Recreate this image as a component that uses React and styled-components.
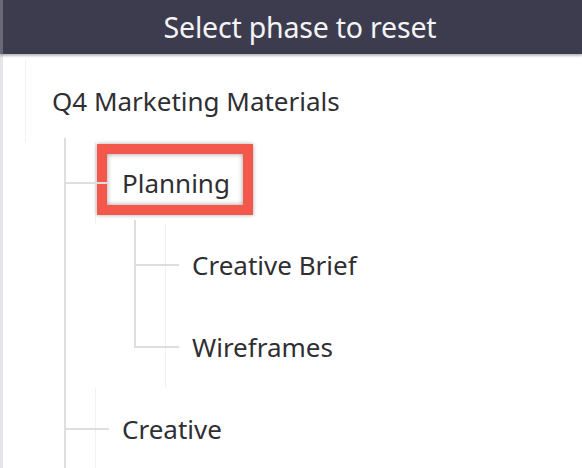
import React from "react";
import styled, { createGlobalStyle, css } from "styled-components";

const Global = createGlobalStyle`
  html, body { margin: 0; padding: 0; background: #fff; }
  body { width: 582px; height: 468px; overflow: hidden; font-family: "Noto Sans", "Open Sans", sans-serif; }
`;

const Frame = styled.div`
  width: 582px;
  height: 468px;
  overflow: hidden;
  display: flex;
  flex-direction: column;
  background: #fff;
`;

const Header = styled.header`
  flex: 0 0 54px;
  display: flex;
  align-items: center;
  justify-content: center;
  padding-left: 15px;
  background: #3d3c4f;
  border-left: 3px solid #6a6978;
  color: #f4f4f6;
  font-size: 28.5px;
  letter-spacing: -0.2px;
  box-shadow: 0 2px 2px rgba(60, 60, 80, 0.35);
  position: relative;
  z-index: 1;
`;

const Body = styled.div`
  flex: 1;
  border-left: 3px solid #e6e6ea;
  padding-top: 6px;
  overflow: hidden;
`;

const Row = styled.div`
  height: 82px;
  display: flex;
  align-items: center;
  border-left: 1px solid #f2f2f4;
  padding-left: ${(p) => p.$pad}px;
  margin-left: ${(p) => p.$offset || 0}px;
`;

const Label = styled.span`
  position: relative;
  font-size: 26px;
  line-height: 32px;
  color: #2f2f33;
  ${(p) =>
    p.$highlight &&
    css`
      &::after {
        content: "";
        position: absolute;
        top: -23px;
        bottom: -16px;
        left: -25px;
        right: -23px;
        border: 10px solid #f4584c;
        box-shadow: 0 0 4px rgba(0, 0, 0, 0.35), inset 0 0 5px rgba(0, 0, 0, 0.4);
      }
    `}
`;

const ChildList = styled.div`
  display: flex;
  flex-direction: column;
  margin-left: ${(p) => p.$offset}px;
`;

const Item = styled.div`
  position: relative;
  padding-left: 31px;

  &::before {
    content: "";
    position: absolute;
    left: 0;
    top: -4px;
    width: 2px;
    height: ${(p) => (p.$last ? "46px" : "calc(100% + 4px)")};
    background: #dededf;
  }

  &::after {
    content: "";
    position: absolute;
    left: 0;
    top: 40px;
    width: 45px;
    height: 2px;
    background: #dededf;
  }
`;

const tree = {
  label: "Q4 Marketing Materials",
  children: [
    {
      label: "Planning",
      highlight: true,
      children: [{ label: "Creative Brief" }, { label: "Wireframes" }],
    },
    { label: "Creative", more: true },
  ],
};

function Node({ node, last }) {
  return (
    <Item $last={last && !node.more}>
      <Row $pad={26}>
        <Label $highlight={node.highlight}>{node.label}</Label>
      </Row>
      {node.children && (
        <ChildList $offset={39}>
          {node.children.map((c, i) => (
            <Node key={c.label} node={c} last={i === node.children.length - 1} />
          ))}
        </ChildList>
      )}
    </Item>
  );
}

export default function App() {
  return (
    <Frame>
      <Global />
      <Header>Select phase to reset</Header>
      <Body>
        <Row $offset={22} $pad={26}>
          <Label>{tree.label}</Label>
        </Row>
        <ChildList $offset={61}>
          {tree.children.map((c, i) => (
            <Node key={c.label} node={c} last={i === tree.children.length - 1} />
          ))}
        </ChildList>
      </Body>
    </Frame>
  );
}
